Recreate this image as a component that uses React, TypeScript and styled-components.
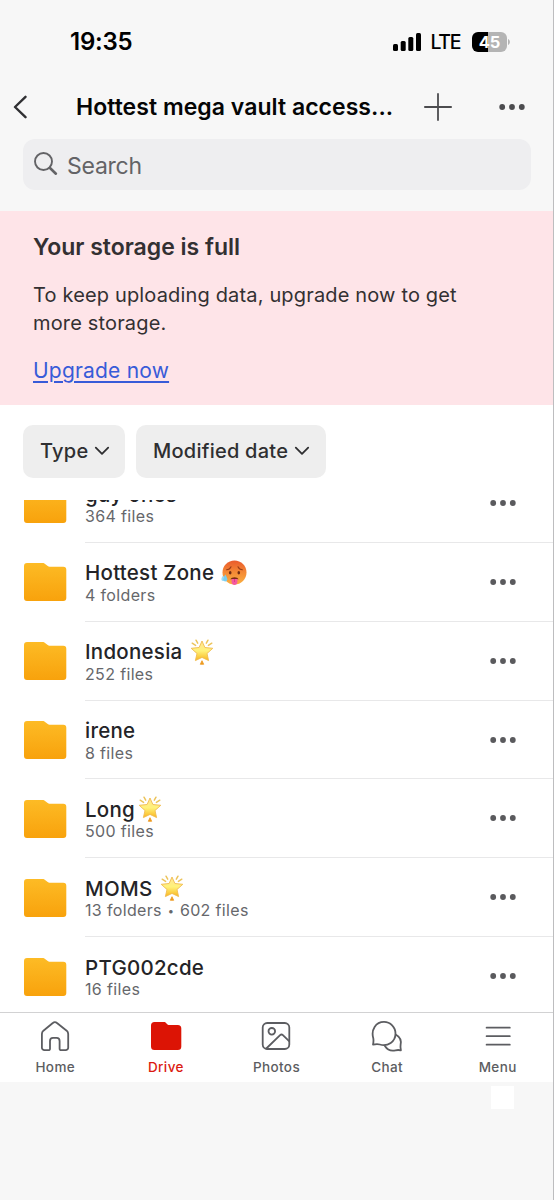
import React from 'react';
import styled, { createGlobalStyle } from 'styled-components';

const GlobalStyle = createGlobalStyle`
  * { box-sizing: border-box; }
  body { margin: 0; background: #f7f7f7; font-family: Inter, "Liberation Sans", sans-serif; }
`;

const Screen = styled.div`
  width: 554px;
  height: 1200px;
  overflow: hidden;
  display: flex;
  flex-direction: column;
  background: #f7f7f7;
  border-right: 1px solid #bdbdbf;
`;

const StatusBar = styled.div`
  height: 82px;
  flex: none;
  display: flex;
  align-items: center;
  padding: 1px 43px 0 70px;
  color: #000;
`;

const Clock = styled.span`
  font-size: 24px;
  font-weight: 600;
  letter-spacing: -0.2px;
  margin-right: auto;
`;

const Network = styled.span`
  font-size: 19.5px;
  font-weight: 500;
  letter-spacing: -1.4px;
  margin: 0 12px 0 10px;
`;

const Battery = styled.div`
  width: 35px;
  height: 20px;
  border-radius: 6px;
  background: linear-gradient(90deg, #000 16px, #b4b4b4 16px);
  color: #fff;
  font-size: 16.5px;
  font-weight: 700;
  line-height: 20px;
  text-align: center;
  letter-spacing: -0.2px;
`;

const Header = styled.header`
  height: 57px;
  flex: none;
  display: flex;
  align-items: center;
  padding: 0 28px 8px 13px;
`;

const Title = styled.h1`
  margin: 0 31px 0 49px;
  width: 317px;
  font-size: 23px;
  font-weight: 600;
  letter-spacing: 0.04px;
  white-space: nowrap;
  color: #050505;
`;

const HeaderDots = styled.div`
  display: flex;
  margin-left: auto;
`;

const SearchBox = styled.div`
  flex: none;
  display: flex;
  align-items: center;
  gap: 8px;
  height: 50.5px;
  margin: 0 22px 0 23px;
  padding: 1px 11px 0;
  border-radius: 12px;
  background: #eeeef0;
  color: #636366;
  font-size: 23px;
`;

const SearchLabel = styled.span`
  padding-top: 2px;
  letter-spacing: -0.25px;
`;

const Banner = styled.section`
  flex: none;
  height: 194px;
  margin-top: 21px;
  padding: 22.5px 33px 0;
  background: #fee4e8;
  color: #333032;
`;

const BannerTitle = styled.h2`
  margin: 0;
  font-size: 23px;
  line-height: 29px;
  font-weight: 600;
`;

const BannerText = styled.p`
  margin: 19px 0 19px;
  font-size: 20px;
  line-height: 28px;
  letter-spacing: 0.16px;
`;

const BannerLink = styled.a`
  display: block;
  padding-top: 1px;
  font-size: 21px;
  line-height: 28px;
  letter-spacing: 0.2px;
  color: #385bd8;
  text-decoration: underline;
  text-decoration-thickness: 1.5px;
  text-underline-offset: 3px;
`;

const Content = styled.main`
  flex: none;
  height: 607px;
  display: flex;
  flex-direction: column;
  background: #fff;
`;

const Filters = styled.div`
  flex: none;
  display: flex;
  gap: 11px;
  padding: 20px 23px 0;
  height: 95.5px;
`;

const Chip = styled.button<{ $width: number }>`
  display: flex;
  align-items: center;
  gap: 6px;
  width: ${({ $width }) => $width}px;
  height: 53px;
  padding: 0 0 0 17px;
  border: 0;
  border-radius: 10px;
  background: #eeeeee;
  color: #2f2f31;
  font: 500 20px Inter, sans-serif;
  letter-spacing: 0.25px;
  white-space: nowrap;
`;

const List = styled.div`
  flex: 1;
  min-height: 0;
  overflow: hidden;
  display: flex;
  flex-direction: column;
  justify-content: flex-end;
`;

const Rows = styled.div`
  flex: none;
  margin-bottom: -4.5px;
`;

const Row = styled.div`
  display: flex;
  align-items: center;
  height: 78.85px;
  padding-left: 24px;
`;

const RowBody = styled.div<{ $last?: boolean }>`
  flex: 1;
  align-self: stretch;
  display: flex;
  align-items: center;
  justify-content: space-between;
  margin-left: 18px;
  padding-right: 37px;
  border-bottom: 1px solid ${({ $last }) => ($last ? 'transparent' : '#e8e8e9')};
`;

const RowText = styled.div`
  padding-top: 3px;
`;

const RowTitle = styled.div<{ $gap: number }>`
  display: flex;
  align-items: center;
  gap: ${({ $gap }) => $gap}px;
  height: 24px;
  font-size: 20.5px;
  font-weight: 450;
  color: #242427;
  letter-spacing: 0.25px;
`;

const RowMeta = styled.div`
  height: 21px;
  font-size: 16px;
  line-height: 20px;
  color: #66676b;
  letter-spacing: 0.35px;
`;

const Bullet = styled.span`
  display: inline-block;
  width: 18px;
  font-size: 11px;
  text-align: center;
  vertical-align: 1px;
`;

const TabBar = styled.nav`
  flex: none;
  display: grid;
  grid-template-columns: repeat(5, 1fr);
  height: 70px;
  border-top: 1px solid #d2d2d3;
  background: #fff;
`;

const Tab = styled.div<{ $active?: boolean }>`
  display: flex;
  flex-direction: column;
  align-items: center;
  gap: 3.5px;
  padding-top: 7px;
  color: ${({ $active }) => ($active ? '#db1a10' : '#5c5d61')};
  font-size: 13.5px;
  font-weight: 500;
  line-height: 20px;
  letter-spacing: 0.4px;
`;

const Footer = styled.footer`
  flex: 1;
  display: flex;
  justify-content: flex-end;
  padding: 4px 39px 0 0;
`;

const Marker = styled.span`
  width: 23px;
  height: 23px;
  background: #fff;
`;

const Dots = ({ color }: { color: string }) => (
  <svg width="26" height="8" viewBox="0 0 26 8" fill={color}>
    <circle cx="3.2" cy="4" r="2.9" />
    <circle cx="13" cy="4" r="2.9" />
    <circle cx="22.8" cy="4" r="2.9" />
  </svg>
);

const ChevronDown = () => (
  <svg width="16" height="12" viewBox="0 0 16 12" fill="none" stroke="#2f2f31" strokeWidth="1.8" strokeLinecap="round" strokeLinejoin="round">
    <path d="M1.8 2.6 8 8.9l6.2-6.3" />
  </svg>
);

const Folder = () => (
  <svg width="43" height="38" viewBox="0 0 43 38">
    <defs>
      <linearGradient id="folderFill" x1="0" y1="0" x2="0" y2="1">
        <stop offset="0" stopColor="#fdbb25" />
        <stop offset="1" stopColor="#f8a20c" />
      </linearGradient>
    </defs>
    <path fill="url(#folderFill)" d="M3 0H18.4c1.3 0 2.1.4 3 1.2l2 1.5c.9.7 1.6 1 2.8 1H39.3a3 3 0 0 1 3 3V35a3 3 0 0 1-3 3H3a3 3 0 0 1-3-3V3a3 3 0 0 1 3-3Z" />
  </svg>
);

const GlowingStar = () => (
  <svg width="24" height="26" viewBox="0 0 24 26">
    <defs>
      <linearGradient id="starFill" x1="0" y1="0" x2="0" y2="1">
        <stop offset="0" stopColor="#ffe394" />
        <stop offset="0.5" stopColor="#fff27a" />
        <stop offset="1" stopColor="#f9b51e" />
      </linearGradient>
    </defs>
    <path d="m12 2 2.900 6.500 7.900.8-5.800 5.200 1.600 7.100-6.600-3.200-6.600 3.200L7 14.500 1.200 9.300l7.900-.8Z" fill="url(#starFill)" stroke="#f0bb50" strokeWidth=".9" strokeLinejoin="round" />
    <path d="m2.200 4.200 3.400 2.200M6 1.200l1.700 3M21.800 4.200l-3.400 2.200M18 1.200l-1.700 3" stroke="#ecc45c" strokeWidth="1.500" strokeLinecap="round" />
    <path d="m12 21.700 1.700 3.600h-3.400Z" fill="#ed9b20" stroke="#ed9b20" strokeWidth=".8" strokeLinejoin="round" />
  </svg>
);

const HotFace = () => (
  <svg width="26" height="26" viewBox="0 0 26 26">
    <defs>
      <linearGradient id="faceFill" x1="0" y1="0" x2="0" y2="1">
        <stop offset="0" stopColor="#ea5a2c" />
        <stop offset="0.5" stopColor="#f48a36" />
        <stop offset="1" stopColor="#fbb040" />
      </linearGradient>
    </defs>
    <circle cx="13.500" cy="12.500" r="12" fill="url(#faceFill)" />
    <path d="M5.600 9.700c2 0 3.600-1.100 4.400-2.900M21.400 9.700c-2 0-3.600-1.100-4.400-2.900" fill="none" stroke="#9a3c17" strokeWidth="1.100" strokeLinecap="round" />
    <ellipse cx="9.200" cy="12.700" rx="1.300" ry="1.700" fill="#6e2b12" />
    <ellipse cx="17.800" cy="12.700" rx="1.300" ry="1.700" fill="#6e2b12" />
    <path d="M9.400 19.300c1-2.700 7.200-2.700 8.200 0Z" fill="#7c2a14" />
    <path d="M10.600 18.900h5.800v3.200c0 3.900-5.800 3.900-5.800 0Z" fill="#f559a0" />
    <path d="M13.500 19v3" stroke="#d83b83" strokeWidth=".8" />
    <path d="M1.900 15.500c-1 1.800-1.500 2.900-1.500 3.900a1.800 1.800 0 0 0 3.400.7c.3-1-.2-2-1.900-4.600Z" fill="#9bdcf5" />
    <path d="M4.300 14.400c-1.300 2.300-2 3.800-2 5.100a2 2 0 0 0 4 0c0-1.300-.7-2.800-2-5.100Z" fill="#78cef0" />
  </svg>
);

const stroke = { fill: 'none', stroke: 'currentColor', strokeWidth: 1.8, strokeLinecap: 'round', strokeLinejoin: 'round' } as const;

const HomeIcon = () => (
  <svg width="32" height="34" viewBox="0 0 32 34" {...stroke}>
    <path d="M5.400 30.200H9.500a1.500 1.500 0 0 0 1.500-1.500V20.900a3 3 0 0 1 3-3h3.600a3 3 0 0 1 3 3v7.800a1.500 1.500 0 0 0 1.500 1.500h4.600A2.500 2.500 0 0 0 29.200 27.700V13.900c0-1.400-.5-2.300-1.500-3.200L18 3a3.200 3.200 0 0 0-4.200 0L4.400 10.700c-1 .9-1.500 1.800-1.500 3.200V27.700a2.500 2.500 0 0 0 2.500 2.500Z" />
  </svg>
);

const DriveIcon = () => (
  <svg width="32" height="34" viewBox="0 0 32 34" fill="#dc1405">
    <path d="M4.500 2h9.200c1.700 0 2.200.7 3 1.700.8.900 1.500 1.200 2.800 1.200h8.300a3.500 3.500 0 0 1 3.500 3.500v18a3.500 3.500 0 0 1-3.500 3.500H4.500A3.500 3.500 0 0 1 1 26.400V5.500A3.500 3.500 0 0 1 4.500 2Z" />
  </svg>
);

const PhotosIcon = () => (
  <svg width="32" height="34" viewBox="0 0 32 34" {...stroke}>
    <rect x="2.700" y="3" width="26.600" height="26" rx="4.500" />
    <circle cx="11.800" cy="11.300" r="3.300" />
    <path d="m6.300 28.500 13.800-13.300a2 2 0 0 1 2.800 0l6.200 5.900" />
  </svg>
);

const ChatIcon = () => (
  <svg width="32" height="34" viewBox="0 0 32 34" {...stroke}>
    <path d="M2 24.600c.5-2.400.700-4.100.3-6.300C-.2 9.900 4.700 1.900 13 1.900c6.400 0 11.500 5.100 11.500 11.600 0 8.300-7.500 13.200-15.700 11-2.200-.6-4.300-.4-6.800.1Z" />
    <path d="M25 14.700c4 2.200 5.400 6 4.600 10-.3 1.900-.2 3.600.3 5.600-2-.4-3.500-.4-5.400 0-4.600 1-8.300-.6-10.600-4.300" />
  </svg>
);

const MenuIcon = () => (
  <svg width="32" height="34" viewBox="0 0 32 34" {...stroke}>
    <path d="M4.600 7.700h23.200M4.600 16.200h23.200M4.600 24.700h23.200" />
  </svg>
);

type Item = { name: string; meta: string[]; gap?: number; emoji?: React.ReactNode };

const items: Item[] = [
  { name: 'guy ones', meta: ['364 files'] },
  { name: 'Hottest Zone', meta: ['4 folders'], gap: 7, emoji: <HotFace /> },
  { name: 'Indonesia', meta: ['252 files'], gap: 8, emoji: <GlowingStar /> },
  { name: 'irene', meta: ['8 files'] },
  { name: 'Long', meta: ['500 files'], gap: 3, emoji: <GlowingStar /> },
  { name: 'MOMS', meta: ['13 folders', '602 files'], gap: 8, emoji: <GlowingStar /> },
  { name: 'PTG002cde', meta: ['16 files'] },
];

const tabs = [
  { label: 'Home', icon: <HomeIcon /> },
  { label: 'Drive', icon: <DriveIcon />, active: true },
  { label: 'Photos', icon: <PhotosIcon /> },
  { label: 'Chat', icon: <ChatIcon /> },
  { label: 'Menu', icon: <MenuIcon /> },
];

export default function App() {
  return (
    <>
      <GlobalStyle />
      <Screen>
        <StatusBar>
          <Clock>19:35</Clock>
          <svg width="28" height="18" viewBox="0 0 28 18">
            <rect x="0" y="11" width="5" height="7" rx="1.500" />
            <rect x="7.700" y="8" width="5" height="10" rx="1.500" />
            <rect x="15.300" y="4" width="5" height="14" rx="1.500" />
            <rect x="23" y="0" width="5" height="18" rx="1.500" />
          </svg>
          <Network>LTE</Network>
          <Battery>45</Battery>
          <svg width="3" height="6" viewBox="0 0 3 6"><path d="M1 0c2.500 1 2.500 5 0 6Z" fill="#b4b4b4" /></svg>
        </StatusBar>
        <Header>
          <svg width="14" height="24" viewBox="0 0 14 24" fill="none" stroke="#303033" strokeWidth="2.400" strokeLinecap="round" strokeLinejoin="round">
            <path d="M12.500 1.800 2 12l10.500 10.200" />
          </svg>
          <Title>Hottest mega vault access...</Title>
          <svg width="28" height="28" viewBox="0 0 28 28" stroke="#4c4c4f" strokeWidth="1.800" strokeLinecap="round">
            <path d="M14 .9v26.200M.9 14h26.200" />
          </svg>
          <HeaderDots><Dots color="#4c4c4f" /></HeaderDots>
        </Header>
        <SearchBox>
          <svg width="25" height="25" viewBox="0 0 25 25" fill="none" stroke="#636366" strokeLinecap="round">
            <circle cx="9.500" cy="9.500" r="8.500" strokeWidth="1.900" />
            <path d="m16 16 5.900 5.700" strokeWidth="2.600" />
          </svg>
          <SearchLabel>Search</SearchLabel>
        </SearchBox>
        <Banner>
          <BannerTitle>Your storage is full</BannerTitle>
          <BannerText>To keep uploading data, upgrade now to get<br />more storage.</BannerText>
          <BannerLink>Upgrade now</BannerLink>
        </Banner>
        <Content>
          <Filters>
            <Chip $width={102}>Type <ChevronDown /></Chip>
            <Chip $width={190}>Modified date <ChevronDown /></Chip>
          </Filters>
          <List>
            <Rows>
              {items.map((item, i) => (
                <Row key={item.name}>
                  <Folder />
                  <RowBody $last={i === items.length - 1}>
                    <RowText>
                      <RowTitle $gap={item.gap ?? 0}>{item.name}{item.emoji}</RowTitle>
                      <RowMeta>
                        {item.meta[0]}
                        {item.meta[1] && <><Bullet>•</Bullet>{item.meta[1]}</>}
                      </RowMeta>
                    </RowText>
                    <Dots color="#5a5a5d" />
                  </RowBody>
                </Row>
              ))}
            </Rows>
          </List>
        </Content>
        <TabBar>
          {tabs.map((tab) => (
            <Tab key={tab.label} $active={tab.active}>{tab.icon}{tab.label}</Tab>
          ))}
        </TabBar>
        <Footer><Marker /></Footer>
      </Screen>
    </>
  );
}
